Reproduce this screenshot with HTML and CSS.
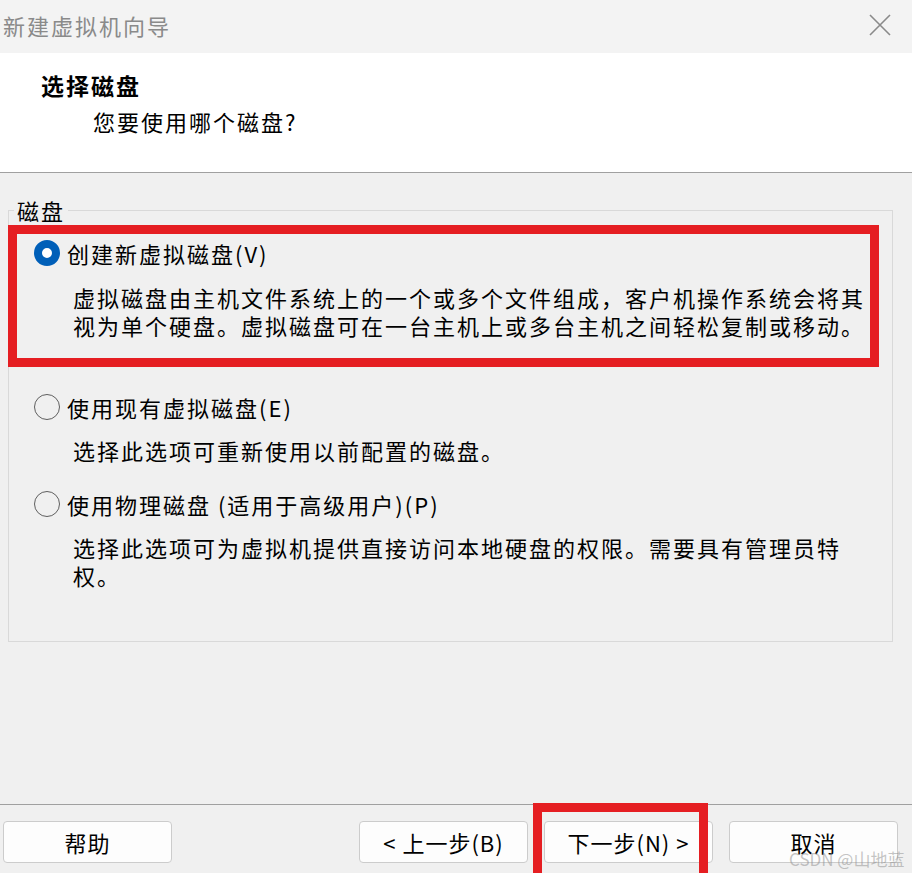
FILE: index.html
```html
<!DOCTYPE html>
<html lang="zh-CN">
<head>
<meta charset="utf-8">
<title>新建虚拟机向导</title>
<link rel="stylesheet" href="styles.css">
</head>
<body>
<div class="window">
  <div class="titlebar">
    <span class="title">新建虚拟机向导</span>
    <svg class="close" width="22" height="22" viewBox="0 0 22 22"><path d="M1 1L21 21M21 1L1 21" stroke="#8a8a8a" stroke-width="1.6" fill="none"/></svg>
  </div>
  <div class="header">
    <h1>选择磁盘</h1>
    <p>您要使用哪个磁盘?</p>
  </div>
  <div class="main">
    <fieldset class="group">
      <legend>磁盘</legend>
      <div class="options">
        <div class="option opt1">
          <div class="row"><span class="radio checked"></span><span class="label">创建新虚拟磁盘(V)</span></div>
          <p class="desc">虚拟磁盘由主机文件系统上的一个或多个文件组成，客户机操作系统会将其<br>视为单个硬盘。虚拟磁盘可在一台主机上或多台主机之间轻松复制或移动。</p>
        </div>
        <div class="option opt2">
          <div class="row"><span class="radio"></span><span class="label">使用现有虚拟磁盘(E)</span></div>
          <p class="desc">选择此选项可重新使用以前配置的磁盘。</p>
        </div>
        <div class="option opt3">
          <div class="row"><span class="radio"></span><span class="label">使用物理磁盘 (适用于高级用户)(P)</span></div>
          <p class="desc">选择此选项可为虚拟机提供直接访问本地硬盘的权限。需要具有管理员特<br>权。</p>
        </div>
      </div>
    </fieldset>
  </div>
  <div class="footer">
    <button class="btn">帮助</button>
    <button class="btn back">&lt; 上一步(B)</button>
    <button class="btn">下一步(N) &gt;</button>
    <button class="btn">取消</button>
  </div>
  <div class="mark mark1"></div>
  <div class="mark mark2"></div>
  <div class="watermark">CSDN @山地蓝</div>
</div>
</body>
</html>
```
FILE: styles.css
```css
* { box-sizing: border-box; }
html, body { margin: 0; padding: 0; }
body {
  background: #f0f0f0;
  font-family: "Noto Sans CJK SC", "Noto Sans", sans-serif;
  color: #000;
}
.window {
  position: relative;
  width: 912px;
  height: 873px;
  overflow: hidden;
  display: flex;
  flex-direction: column;
}
.titlebar {
  height: 53px;
  background: #f3f3f3;
  display: flex;
  align-items: center;
  justify-content: space-between;
  padding: 0 21px 3px 3px;
}
.title {
  font-size: 22px;
  letter-spacing: 2px;
  color: #8a8a8a;
  line-height: 30px;
}
.header {
  height: 120px;
  background: #fff;
  border-bottom: 1px solid #a0a0a0;
  padding-top: 17px;
}
.header h1 {
  margin: 0 0 0 41px;
  font-size: 23px;
  font-weight: bold;
  letter-spacing: 2px;
  line-height: 30px;
}
.header p {
  margin: 6px 0 0 93px;
  font-size: 22px;
  letter-spacing: 2px;
  line-height: 30px;
}
.main {
  height: 631px;
}
.group {
  margin: 22px 19px 0 8px;
  padding: 0;
  border: 1px solid #d9d9d9;
  min-width: 0;
}
.group legend {
  margin-left: 5px;
  padding: 0 3px;
  font-size: 22px;
  letter-spacing: 2px;
  line-height: 30px;
}
.options {
  padding: 13px 0 52px 25px;
}
.opt2 { margin-top: 53px; }
.opt3 { margin-top: 25px; }
.row {
  display: flex;
  align-items: center;
  height: 30px;
}
.radio {
  width: 26px;
  height: 26px;
  border-radius: 50%;
  border: 1.5px solid #5f5f5f;
  margin-right: 7px;
  flex: none;
}
.radio.checked {
  border: 8px solid #005fb8;
  background: #fff;
}
.label {
  font-size: 22px;
  letter-spacing: 2px;
  line-height: 30px;
}
.desc {
  margin: 14px 0 0 39px;
  font-size: 22px;
  letter-spacing: 2px;
  line-height: 28px;
}
.opt1 .desc { margin-top: 15px; }
.footer {
  flex: 1;
  border-top: 1px solid #a0a0a0;
  padding: 16px 14px 0 3px;
  display: flex;
  align-items: flex-start;
  gap: 16px;
}
.btn {
  width: 169px;
  height: 42px;
  background: #fdfdfd;
  border: 1px solid #cccccc;
  border-radius: 4px;
  font-family: "Noto Sans CJK SC", "Noto Sans", sans-serif;
  font-size: 22px;
  letter-spacing: 1px;
  color: #000;
  padding: 0;
  line-height: 40px;
}
.btn.back { margin-left: auto; }
.mark {
  position: absolute;
  border: 9px solid #e51e22;
}
.mark1 {
  left: 8px;
  top: 225px;
  width: 871px;
  height: 142px;
}
.mark2 {
  left: 533px;
  top: 803px;
  width: 175px;
  height: 80px;
}
.watermark {
  position: absolute;
  left: 789px;
  top: 846px;
  font-size: 17px;
  color: rgba(140, 140, 140, 0.5);
  white-space: nowrap;
}
```
